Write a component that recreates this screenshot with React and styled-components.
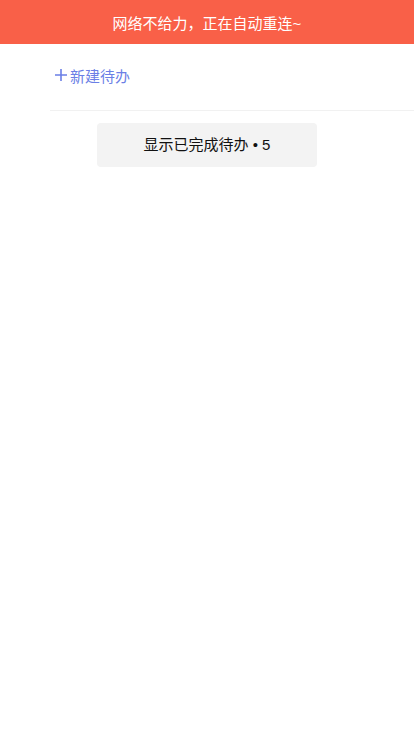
import styled, { createGlobalStyle } from 'styled-components';

const GlobalStyle = createGlobalStyle`
  body {
    margin: 0;
    background: #fff;
    font-family: "Liberation Sans", "Noto Sans CJK SC", sans-serif;
  }
`;

// 顶部断网提示条
const Banner = styled.div`
  height: 44px;
  display: flex;
  align-items: center;
  justify-content: center;
  background: #f96048;
  color: #fff;
  font-size: 15px;
`;

const Body = styled.div`
  padding-left: 50px;
`;

// 新建待办行
const NewRow = styled.div`
  height: 62px;
  padding: 0 0 4px 4px;
  display: flex;
  align-items: center;
  gap: 2px;
  color: #6b7fe6;
  font-size: 15px;
  border-bottom: 1px solid #f1f1f1;
`;

const Footer = styled.div`
  display: flex;
  justify-content: center;
  padding-top: 12px;
`;

// 显示已完成按钮
const ShowDone = styled.button`
  width: 220px;
  height: 44px;
  padding: 0 0 3px;
  border: none;
  border-radius: 4px;
  background: #f3f3f3;
  color: #111;
  font-family: inherit;
  font-size: 15px;
  cursor: pointer;
`;

const Plus = () => (
  <svg width="14" height="14" viewBox="0 0 14 14">
    <path d="M7 1v12M1 7h12" stroke="#6b7fe6" strokeWidth="1.6" fill="none" />
  </svg>
);

export default function App() {
  return (
    <>
      <GlobalStyle />
      <Banner>网络不给力，正在自动重连~</Banner>
      <Body>
        <NewRow>
          <Plus />
          新建待办
        </NewRow>
      </Body>
      <Footer>
        <ShowDone>显示已完成待办 • 5</ShowDone>
      </Footer>
    </>
  );
}
